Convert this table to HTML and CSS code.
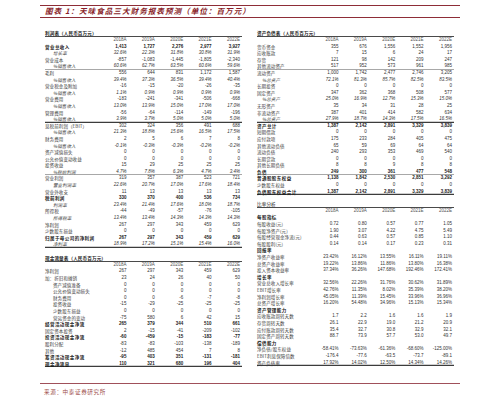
FILE: index.html
```html
<!DOCTYPE html>
<html lang="zh-CN">
<head>
<meta charset="utf-8">
<title>天味食品三大财务报表预测</title>
<link rel="stylesheet" href="styles.css">
</head>
<body>
<div class="page">
  <div class="title-bar"><span class="title">图表 1：天味食品三大财务报表预测（单位：百万元）</span></div>
  <div class="tables">
    <div class="col">
      <section class="fin">
        <div class="sec-head">利润表（人民币百万元）</div>
        <div class="row yrs"><span class="lb"></span><span>2018A</span><span>2019A</span><span>2020E</span><span>2021E</span><span>2022E</span></div>
        <div class="row b"><span class="lb">营业总收入</span><span>1,413</span><span>1,727</span><span>2,276</span><span>2,977</span><span>3,927</span></div>
        <div class="row it"><span class="lb ind">增长率</span><span>32.6%</span><span>22.3%</span><span>31.8%</span><span>30.8%</span><span>31.9%</span></div>
        <div class="row"><span class="lb">营业成本</span><span>-857</span><span>-1,083</span><span>-1,445</span><span>-1,805</span><span>-2,340</span></div>
        <div class="row it thin"><span class="lb ind">%销售收入</span><span>60.6%</span><span>62.7%</span><span>63.5%</span><span>60.6%</span><span>59.6%</span></div>
        <div class="row"><span class="lb">毛利</span><span>556</span><span>644</span><span>831</span><span>1,172</span><span>1,587</span></div>
        <div class="row it"><span class="lb ind">%销售收入</span><span>39.4%</span><span>37.3%</span><span>36.5%</span><span>39.4%</span><span>40.4%</span></div>
        <div class="row"><span class="lb">营业税金及附加</span><span>-16</span><span>-15</span><span>-20</span><span>-26</span><span>-35</span></div>
        <div class="row it"><span class="lb ind">%销售收入</span><span>1.1%</span><span>0.9%</span><span>0.9%</span><span>0.9%</span><span>0.9%</span></div>
        <div class="row"><span class="lb">营业费用</span><span>-183</span><span>-241</span><span>-341</span><span>-506</span><span>-668</span></div>
        <div class="row it"><span class="lb ind">%销售收入</span><span>13.0%</span><span>13.9%</span><span>15.0%</span><span>17.0%</span><span>17.0%</span></div>
        <div class="row"><span class="lb">管理费用</span><span>-56</span><span>-64</span><span>-114</span><span>-149</span><span>-196</span></div>
        <div class="row it thick"><span class="lb ind">%销售收入</span><span>3.9%</span><span>3.7%</span><span>5.0%</span><span>5.0%</span><span>5.0%</span></div>
        <div class="row"><span class="lb">息税前利润（EBIT）</span><span>302</span><span>324</span><span>356</span><span>491</span><span>688</span></div>
        <div class="row it"><span class="lb ind">%销售收入</span><span>21.3%</span><span>18.8%</span><span>15.6%</span><span>16.5%</span><span>17.5%</span></div>
        <div class="row"><span class="lb">财务费用</span><span>2</span><span>5</span><span>6</span><span>7</span><span>8</span></div>
        <div class="row it"><span class="lb ind">%销售收入</span><span>-0.1%</span><span>-0.3%</span><span>-0.3%</span><span>-0.2%</span><span>-0.2%</span></div>
        <div class="row"><span class="lb">资产减值损失</span><span>0</span><span>0</span><span>0</span><span>0</span><span>0</span></div>
        <div class="row"><span class="lb">公允价值变动收益</span><span>0</span><span>0</span><span>0</span><span>0</span><span>0</span></div>
        <div class="row"><span class="lb">投资收益</span><span>15</span><span>29</span><span>25</span><span>25</span><span>25</span></div>
        <div class="row it thin"><span class="lb ind">%税前利润</span><span>4.7%</span><span>7.8%</span><span>6.3%</span><span>4.7%</span><span>3.4%</span></div>
        <div class="row"><span class="lb">营业利润</span><span>319</span><span>357</span><span>387</span><span>523</span><span>721</span></div>
        <div class="row it"><span class="lb ind">营业利润率</span><span>22.6%</span><span>20.7%</span><span>17.0%</span><span>17.6%</span><span>18.4%</span></div>
        <div class="row"><span class="lb">营业外收支</span><span>11</span><span>13</span><span>13</span><span>13</span><span>13</span></div>
        <div class="row b"><span class="lb">税前利润</span><span>330</span><span>370</span><span>400</span><span>536</span><span>734</span></div>
        <div class="row it"><span class="lb ind">利润率</span><span>23.4%</span><span>21.4%</span><span>17.6%</span><span>18.0%</span><span>18.7%</span></div>
        <div class="row"><span class="lb">所得税</span><span>-44</span><span>-49</span><span>-57</span><span>-76</span><span>-105</span></div>
        <div class="row it"><span class="lb ind">所得税率</span><span>13.4%</span><span>13.4%</span><span>14.3%</span><span>14.3%</span><span>14.3%</span></div>
        <div class="row"><span class="lb">净利润</span><span>267</span><span>297</span><span>343</span><span>459</span><span>629</span></div>
        <div class="row"><span class="lb">少数股东损益</span><span>0</span><span>0</span><span>0</span><span>0</span><span>0</span></div>
        <div class="row b"><span class="lb">归属于母公司的净利润</span><span>267</span><span>297</span><span>343</span><span>459</span><span>629</span></div>
        <div class="row it thick"><span class="lb ind">净利率</span><span>18.9%</span><span>17.2%</span><span>15.1%</span><span>15.4%</span><span>16.0%</span></div>
      </section>
      <section class="fin cash">
        <div class="sec-head">现金流量表（人民币百万元）</div>
        <div class="row yrs"><span class="lb"></span><span>2018A</span><span>2019A</span><span>2020E</span><span>2021E</span><span>2022E</span></div>
        <div class="row"><span class="lb">净利润</span><span>267</span><span>297</span><span>343</span><span>459</span><span>629</span></div>
        <div class="row"><span class="lb">加：折旧和摊销</span><span>23</span><span>24</span><span>26</span><span>40</span><span>50</span></div>
        <div class="row"><span class="lb ind">资产减值准备</span><span>0</span><span>0</span><span>0</span><span>0</span><span>0</span></div>
        <div class="row"><span class="lb ind">公允价值变动损失</span><span>0</span><span>0</span><span>0</span><span>0</span><span>0</span></div>
        <div class="row"><span class="lb ind">财务费用</span><span>0</span><span>0</span><span>-6</span><span>-7</span><span>-8</span></div>
        <div class="row"><span class="lb ind">投资收益</span><span>-15</span><span>-29</span><span>-25</span><span>-25</span><span>-25</span></div>
        <div class="row"><span class="lb ind">少数股东损益</span><span>0</span><span>0</span><span>0</span><span>0</span><span>0</span></div>
        <div class="row"><span class="lb ind">营运资金的变动</span><span>-75</span><span>580</span><span>6</span><span>42</span><span>15</span></div>
        <div class="row b"><span class="lb">经营活动现金净流</span><span>265</span><span>379</span><span>344</span><span>510</span><span>661</span></div>
        <div class="row"><span class="lb">固定资本投资</span><span>2</span><span>-15</span><span>-41</span><span>-209</span><span>-102</span></div>
        <div class="row b"><span class="lb">投资活动现金净流</span><span>-60</span><span>-459</span><span>-15</span><span>-183</span><span>-77</span></div>
        <div class="row"><span class="lb">股利分配</span><span>-83</span><span>-83</span><span>-103</span><span>-138</span><span>-189</span></div>
        <div class="row"><span class="lb">其他</span><span>-12</span><span>485</span><span>454</span><span>7</span><span>8</span></div>
        <div class="row b"><span class="lb">筹资活动现金净流</span><span>-95</span><span>403</span><span>351</span><span>-131</span><span>-181</span></div>
        <div class="row b thick"><span class="lb">现金净流量</span><span>110</span><span>321</span><span>680</span><span>196</span><span>404</span></div>
      </section>
    </div>
    <div class="col">
      <section class="fin">
        <div class="sec-head">资产负债表（人民币百万元）</div>
        <div class="row yrs"><span class="lb"></span><span>2018A</span><span>2019A</span><span>2020E</span><span>2021E</span><span>2022E</span></div>
        <div class="row"><span class="lb">货币资金</span><span>355</span><span>676</span><span>1,556</span><span>1,552</span><span>1,956</span></div>
        <div class="row"><span class="lb">应收账款</span><span>7</span><span>15</span><span>6</span><span>24</span><span>17</span></div>
        <div class="row"><span class="lb">存货</span><span>121</span><span>98</span><span>142</span><span>209</span><span>247</span></div>
        <div class="row thin"><span class="lb">其他流动资产</span><span>517</span><span>952</span><span>573</span><span>961</span><span>985</span></div>
        <div class="row"><span class="lb">流动资产</span><span>1,000</span><span>1,742</span><span>2,477</span><span>2,746</span><span>3,205</span></div>
        <div class="row it"><span class="lb ind2">%总资产</span><span>72.1%</span><span>81.3%</span><span>85.7%</span><span>82.5%</span><span>83.5%</span></div>
        <div class="row"><span class="lb">长期投资</span><span>0</span><span>0</span><span>0</span><span>0</span><span>0</span></div>
        <div class="row"><span class="lb">固定资产</span><span>347</span><span>362</span><span>368</span><span>508</span><span>577</span></div>
        <div class="row it"><span class="lb ind2">%总资产</span><span>25.0%</span><span>16.9%</span><span>12.7%</span><span>15.3%</span><span>15.0%</span></div>
        <div class="row"><span class="lb">无形资产</span><span>35</span><span>34</span><span>31</span><span>28</span><span>25</span></div>
        <div class="row"><span class="lb">非流动资产</span><span>387</span><span>401</span><span>414</span><span>582</span><span>634</span></div>
        <div class="row it thick"><span class="lb ind2">%总资产</span><span>27.9%</span><span>18.7%</span><span>14.3%</span><span>17.5%</span><span>16.5%</span></div>
        <div class="row b"><span class="lb">资产总计</span><span>1,387</span><span>2,142</span><span>2,891</span><span>3,329</span><span>3,839</span></div>
        <div class="row"><span class="lb">短期借款</span><span>0</span><span>0</span><span>0</span><span>0</span><span>0</span></div>
        <div class="row"><span class="lb">应付款项</span><span>175</span><span>233</span><span>284</span><span>405</span><span>475</span></div>
        <div class="row"><span class="lb">其他流动负债</span><span>65</span><span>59</span><span>69</span><span>64</span><span>64</span></div>
        <div class="row"><span class="lb">流动负债</span><span>240</span><span>293</span><span>353</span><span>469</span><span>540</span></div>
        <div class="row"><span class="lb">长期贷款</span><span>0</span><span>0</span><span>0</span><span>0</span><span>0</span></div>
        <div class="row"><span class="lb">其他长期负债</span><span>8</span><span>8</span><span>9</span><span>8</span><span>8</span></div>
        <div class="row b thin"><span class="lb">负债</span><span>249</span><span>300</span><span>361</span><span>477</span><span>548</span></div>
        <div class="row b"><span class="lb">普通股股东权益</span><span>1,138</span><span>1,842</span><span>2,530</span><span>2,851</span><span>3,292</span></div>
        <div class="row"><span class="lb">少数股东权益</span><span>0</span><span>0</span><span>0</span><span>0</span><span>0</span></div>
        <div class="row b thick"><span class="lb">负债股东权益合计</span><span>1,387</span><span>2,142</span><span>2,891</span><span>3,329</span><span>3,839</span></div>
      </section>
      <section class="fin ratio">
        <div class="sec-head light">比率分析</div>
        <div class="row yrs"><span class="lb"></span><span>2018A</span><span>2019A</span><span>2020E</span><span>2021E</span><span>2022E</span></div>
        <div class="row b"><span class="lb">每股指标</span></div>
        <div class="row"><span class="lb">每股收益(元)</span><span>0.72</span><span>0.80</span><span>0.57</span><span>0.77</span><span>1.05</span></div>
        <div class="row"><span class="lb">每股净资产(元)</span><span>1.90</span><span>3.07</span><span>4.22</span><span>4.75</span><span>5.49</span></div>
        <div class="row"><span class="lb">每股经营现金净流(元)</span><span>0.44</span><span>0.63</span><span>0.57</span><span>0.85</span><span>1.10</span></div>
        <div class="row"><span class="lb">每股股利(元)</span><span>0.14</span><span>0.14</span><span>0.17</span><span>0.23</span><span>0.31</span></div>
        <div class="row b"><span class="lb">回报率</span></div>
        <div class="row"><span class="lb">净资产收益率</span><span>23.42%</span><span>16.12%</span><span>13.55%</span><span>16.11%</span><span>19.11%</span></div>
        <div class="row"><span class="lb">总资产收益率</span><span>19.22%</span><span>13.86%</span><span>11.86%</span><span>13.80%</span><span>16.38%</span></div>
        <div class="row"><span class="lb">投入资本收益率</span><span>37.34%</span><span>36.26%</span><span>147.68%</span><span>192.46%</span><span>172.41%</span></div>
        <div class="row b"><span class="lb">增长率</span></div>
        <div class="row"><span class="lb">营业总收入增长率</span><span>32.56%</span><span>22.26%</span><span>31.76%</span><span>30.62%</span><span>31.89%</span></div>
        <div class="row"><span class="lb">EBIT增长率</span><span>42.76%</span><span>11.35%</span><span>8.02%</span><span>35.39%</span><span>38.20%</span></div>
        <div class="row"><span class="lb">净利润增长率</span><span>45.05%</span><span>11.39%</span><span>15.45%</span><span>33.96%</span><span>36.96%</span></div>
        <div class="row"><span class="lb">总资产增长率</span><span>16.20%</span><span>54.48%</span><span>34.96%</span><span>15.13%</span><span>15.34%</span></div>
        <div class="row b"><span class="lb">资产管理能力</span></div>
        <div class="row"><span class="lb">应收账款周转天数</span><span>1.7</span><span>2.2</span><span>1.6</span><span>1.6</span><span>1.9</span></div>
        <div class="row"><span class="lb">存货周转天数</span><span>26.1</span><span>22.9</span><span>19.0</span><span>21.2</span><span>20.9</span></div>
        <div class="row"><span class="lb">应付账款周转天数</span><span>35.4</span><span>32.7</span><span>30.8</span><span>32.9</span><span>32.1</span></div>
        <div class="row"><span class="lb">固定资产周转天数</span><span>88.7</span><span>73.9</span><span>57.7</span><span>53.0</span><span>49.7</span></div>
        <div class="row b"><span class="lb">偿债能力</span></div>
        <div class="row"><span class="lb">净负债/股东权益</span><span>-58.41%</span><span>-73.63%</span><span>-61.36%</span><span>-68.60%</span><span>-125.00%</span></div>
        <div class="row"><span class="lb">EBIT利息保障倍数</span><span>-176.4</span><span>-77.6</span><span>-63.5</span><span>-73.7</span><span>-89.1</span></div>
        <div class="row thick"><span class="lb">资产负债率</span><span>17.92%</span><span>14.02%</span><span>12.50%</span><span>14.34%</span><span>14.26%</span></div>
      </section>
    </div>
  </div>
  <div class="source">来源：中泰证券研究所</div>
</div>
</body>
</html>
```
FILE: styles.css
```css
html, body {
  margin: 0;
  padding: 0;
  background: #ffffff;
}

.page {
  width: 420px;
  margin-left: 40px;
  padding-top: 5px;
  font-family: "Liberation Sans", "Noto Sans CJK SC", sans-serif;
  color: #333333;
}

.title-bar {
  border-top: 1.5px solid #8e2d37;
  border-bottom: 1.5px solid #8e2d37;
  height: 10.5px;
  padding-left: 5px;
  display: flex;
  align-items: center;
}

.title {
  font-family: "Noto Sans CJK SC", sans-serif;
  font-weight: 700;
  font-style: italic;
  font-size: 7.6px;
  line-height: 10px;
  letter-spacing: 1px;
  color: #8a1f2b;
  white-space: nowrap;
}

.tables {
  display: grid;
  grid-template-columns: 197px 197px;
  column-gap: 15px;
  padding-left: 5px;
  margin-top: 12.5px;
  align-items: start;
}

.col {
  display: flex;
  flex-direction: column;
}

.fin.cash {
  margin-top: 6.8px;
}

.fin.ratio {
  margin-top: 5.6px;
}

.sec-head {
  font-family: "Noto Sans CJK SC", sans-serif;
  font-weight: 700;
  font-size: 4.6px;
  line-height: 6px;
  height: 6px;
  letter-spacing: 0.1px;
  color: #222222;
  border-bottom: 1px solid #4a4a4a;
  white-space: nowrap;
}

.sec-head.light {
  font-weight: 400;
}

.row {
  display: grid;
  grid-template-columns: 55px repeat(5, 28.4px);
  height: 6.6px;
  line-height: 6.6px;
  font-size: 4.5px;
  color: #333333;
  white-space: nowrap;
}

.row > span {
  text-align: right;
  padding-right: 2px;
}

.row > .lb {
  text-align: left;
  padding-right: 0;
  font-family: "Noto Sans CJK SC", sans-serif;
  font-size: 4.5px;
  letter-spacing: 0.1px;
  color: #3a3a3a;
  overflow: visible;
}

.row > .lb.ind {
  padding-left: 8px;
}

.row > .lb.ind2 {
  padding-left: 5px;
}

.row.yrs {
  color: #555555;
}

.row.b {
  font-weight: 700;
  color: #1a1a1a;
}

.row.b > .lb {
  color: #1a1a1a;
  letter-spacing: 0.45px;
}

.row.it {
  font-style: italic;
}

.row.thin {
  box-shadow: inset 0 -0.8px 0 #8c8c8c;
}

.row.thick {
  box-shadow: inset 0 -1.3px 0 #3c3c3c;
}

.source {
  margin-top: 16px;
  border-top: 1.5px solid #a0505a;
  box-shadow: 0 1px 0 #e6c9cc;
  padding-top: 1.5px;
  padding-left: 4px;
  font-family: "Noto Sans CJK SC", sans-serif;
  font-size: 5.6px;
  line-height: 12px;
  letter-spacing: 0.6px;
  color: #a0504e;
}
```
